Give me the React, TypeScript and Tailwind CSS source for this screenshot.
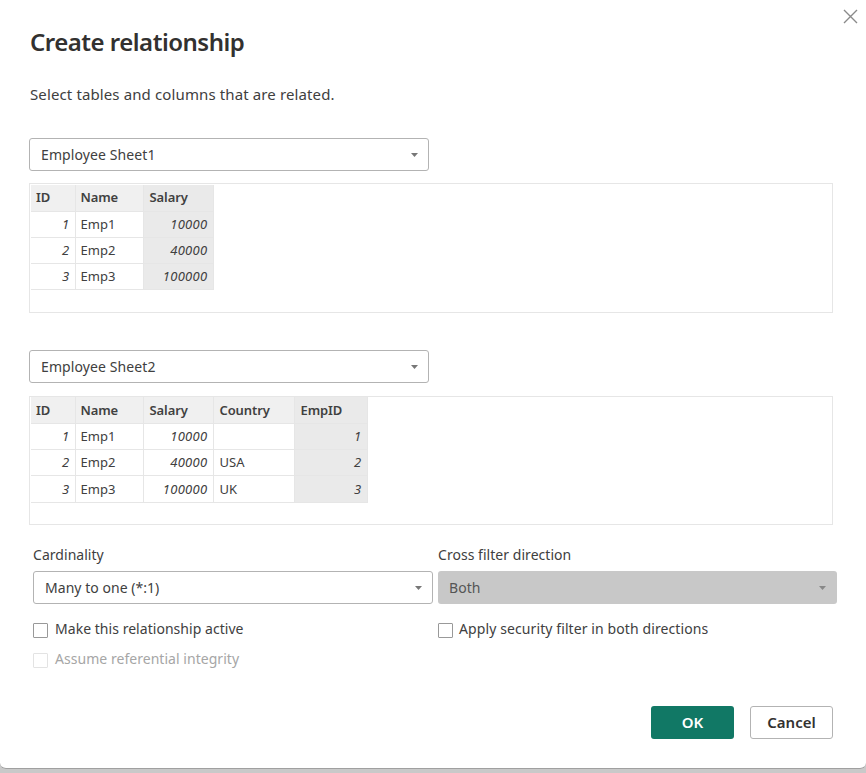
const font = "font-['Noto_Sans',sans-serif]";

type Cell = { t: string; num?: boolean };
function Caret({ color = "#777" }: { color?: string }) {
  return (
    <svg width="7" height="4" viewBox="0 0 7 4" className="shrink-0">
      <path d="M0 0h7L3.5 4z" fill={color} />
    </svg>
  );
}

function Select({ label, w, tracking }: { label: string; w: string; tracking: string }) {
  return (
    <div className={`${w} h-[33px] flex items-center justify-between pl-[11px] pr-[10px] bg-white border border-[#b3b3b3] rounded-[3px] text-[14px] ${tracking} text-[#404040]`}>
      <span className="-mt-px">{label}</span>
      <Caret />
    </div>
  );
}

function DataTable({ widths, headers, rows, selected, box, cellPad, rowClass }: { widths: number[]; headers: string[]; rows: Cell[][]; selected: number; box: string; cellPad: string; rowClass: string }) {
  return (
    <div className={`w-[804px] border border-[#e6e6e6] pl-px ${box}`}>
      <table className="border-collapse table-fixed text-[13px] leading-none text-[#404040]">
        <colgroup>
          {widths.map((w, i) => (
            <col key={i} style={{ width: w }} />
          ))}
        </colgroup>
        <thead>
          <tr className="h-[26px]">
            {headers.map((h, i) => (
              <th key={h} className={`text-left font-semibold tracking-[-0.1px] pr-[5px] ${i >= 2 ? "pl-[6px]" : "pl-[5px]"} border-r border-b border-[#e6e6e6] ${cellPad} ${i === selected ? "bg-[#eaeaea]" : "bg-[#f0f0f0]"}`}>
                {h}
              </th>
            ))}
          </tr>
        </thead>
        <tbody>
          {rows.map((r, ri) => (
            <tr key={ri} className={rowClass}>
              {r.map((c, i) => (
                <td key={i} className={`pr-[5px] ${i >= 2 ? "pl-[6px]" : "pl-[5px]"} border-r border-b border-[#e6e6e6] ${cellPad} ${c.num ? "text-right italic tracking-[0.3px]" : "text-left"} ${i === selected ? "bg-[#eaeaea]" : "bg-white"}`}>
                  {c.t}
                </td>
              ))}
            </tr>
          ))}
        </tbody>
      </table>
    </div>
  );
}

function Check({ label, disabled, gap = "gap-[7px]" }: { label: string; disabled?: boolean; gap?: string }) {
  return (
    <div className={`flex items-center ${gap} text-[14px] ${disabled ? "text-[#a6a6a6]" : "text-[#404040]"}`}>
      <span className={`w-[15px] h-[15px] mt-[3px] border bg-white rounded-[1px] ${disabled ? "border-[#e3e3e3]" : "border-[#999]"}`} />
      <span>{label}</span>
    </div>
  );
}

const n = (t: string): Cell => ({ t, num: true });
const s = (t: string): Cell => ({ t });

export default function App() {
  return (
    <div className={`${font} w-[866px] h-[773px] bg-[#c9c9c9] overflow-hidden`}>
      <div className="relative w-[866px] h-[769px] bg-white rounded-b-[6px] border-b border-[#a0a0a0] pt-[24px] px-[29px]">
        <button className="absolute top-[9px] right-[8px] text-[#8a8a8a]" aria-label="Close">
          <svg width="15" height="15" viewBox="0 0 15 15" fill="none" stroke="currentColor" strokeWidth="1.4" className="block">
            <path d="M1 1l13 13M14 1L1 14" />
          </svg>
        </button>
        <h1 className="ml-px text-[24px] leading-[36px] font-semibold tracking-[-0.5px] text-[#323130]">Create relationship</h1>
        <p className="ml-px mt-[24px] text-[15px] leading-[20px] tracking-[0.12px] text-[#404040]">Select tables and columns that are related.</p>
        <div className="mt-[34px]">
          <Select label="Employee Sheet1" w="w-[400px]" tracking="tracking-[0.1px]" />
        </div>
        <div className="mt-[12px]">
          <DataTable
            widths={[44, 68, 70]}
            headers={["ID", "Name", "Salary"]}
            selected={2}
            box="h-[130px] pt-px"
            cellPad=""
            rowClass="h-[26px]"
            rows={[
              [n("1"), s("Emp1"), n("10000")],
              [n("2"), s("Emp2"), n("40000")],
              [n("3"), s("Emp3"), n("100000")],
            ]}
          />
        </div>
        <div className="mt-[37px]">
          <Select label="Employee Sheet2" w="w-[400px]" tracking="tracking-[0.1px]" />
        </div>
        <div className="mt-[13px]">
          <DataTable
            widths={[44, 68, 70, 81, 73]}
            headers={["ID", "Name", "Salary", "Country", "EmpID"]}
            selected={4}
            box="h-[129px]"
            cellPad="pt-px"
            rowClass="h-[26px] last:h-[27px]"
            rows={[
              [n("1"), s("Emp1"), n("10000"), s(""), n("1")],
              [n("2"), s("Emp2"), n("40000"), s("USA"), n("2")],
              [n("3"), s("Emp3"), n("100000"), s("UK"), n("3")],
            ]}
          />
        </div>
        <div className="mt-[20px] ml-[4px] flex gap-[5px] text-[14px] tracking-[0.04px] text-[#404040]">
          <div className="w-[400px]">
            <div className="leading-[20px]">Cardinality</div>
            <div className="mt-[6px]">
              <Select label="Many to one (*:1)" w="w-[400px]" tracking="tracking-[0.04px]" />
            </div>
            <div className="mt-[14px]">
              <Check label="Make this relationship active" />
            </div>
            <div className="mt-[9px]">
              <Check label="Assume referential integrity" disabled />
            </div>
          </div>
          <div className="w-[399px]">
            <div className="leading-[20px]">Cross filter direction</div>
            <div className="mt-[6px] h-[33px] flex items-center justify-between pl-[11px] pr-[11px] bg-[#c8c8c8] rounded-[3px] text-[14px] text-[#555]">
              <span className="-mt-px">Both</span>
              <Caret color="#888" />
            </div>
            <div className="mt-[14px] tracking-[0.1px]">
              <Check label="Apply security filter in both directions" gap="gap-[6px]" />
            </div>
          </div>
        </div>
        <div className="mt-[37px] flex justify-end gap-[16px] pr-[4px] text-[15px]">
          <button className="w-[83px] h-[33px] rounded-[3px] bg-[#117865] text-white font-semibold">OK</button>
          <button className="w-[83px] h-[33px] rounded-[3px] bg-white border border-[#b3b3b3] text-[#323130] font-semibold">Cancel</button>
        </div>
      </div>
    </div>
  );
}
